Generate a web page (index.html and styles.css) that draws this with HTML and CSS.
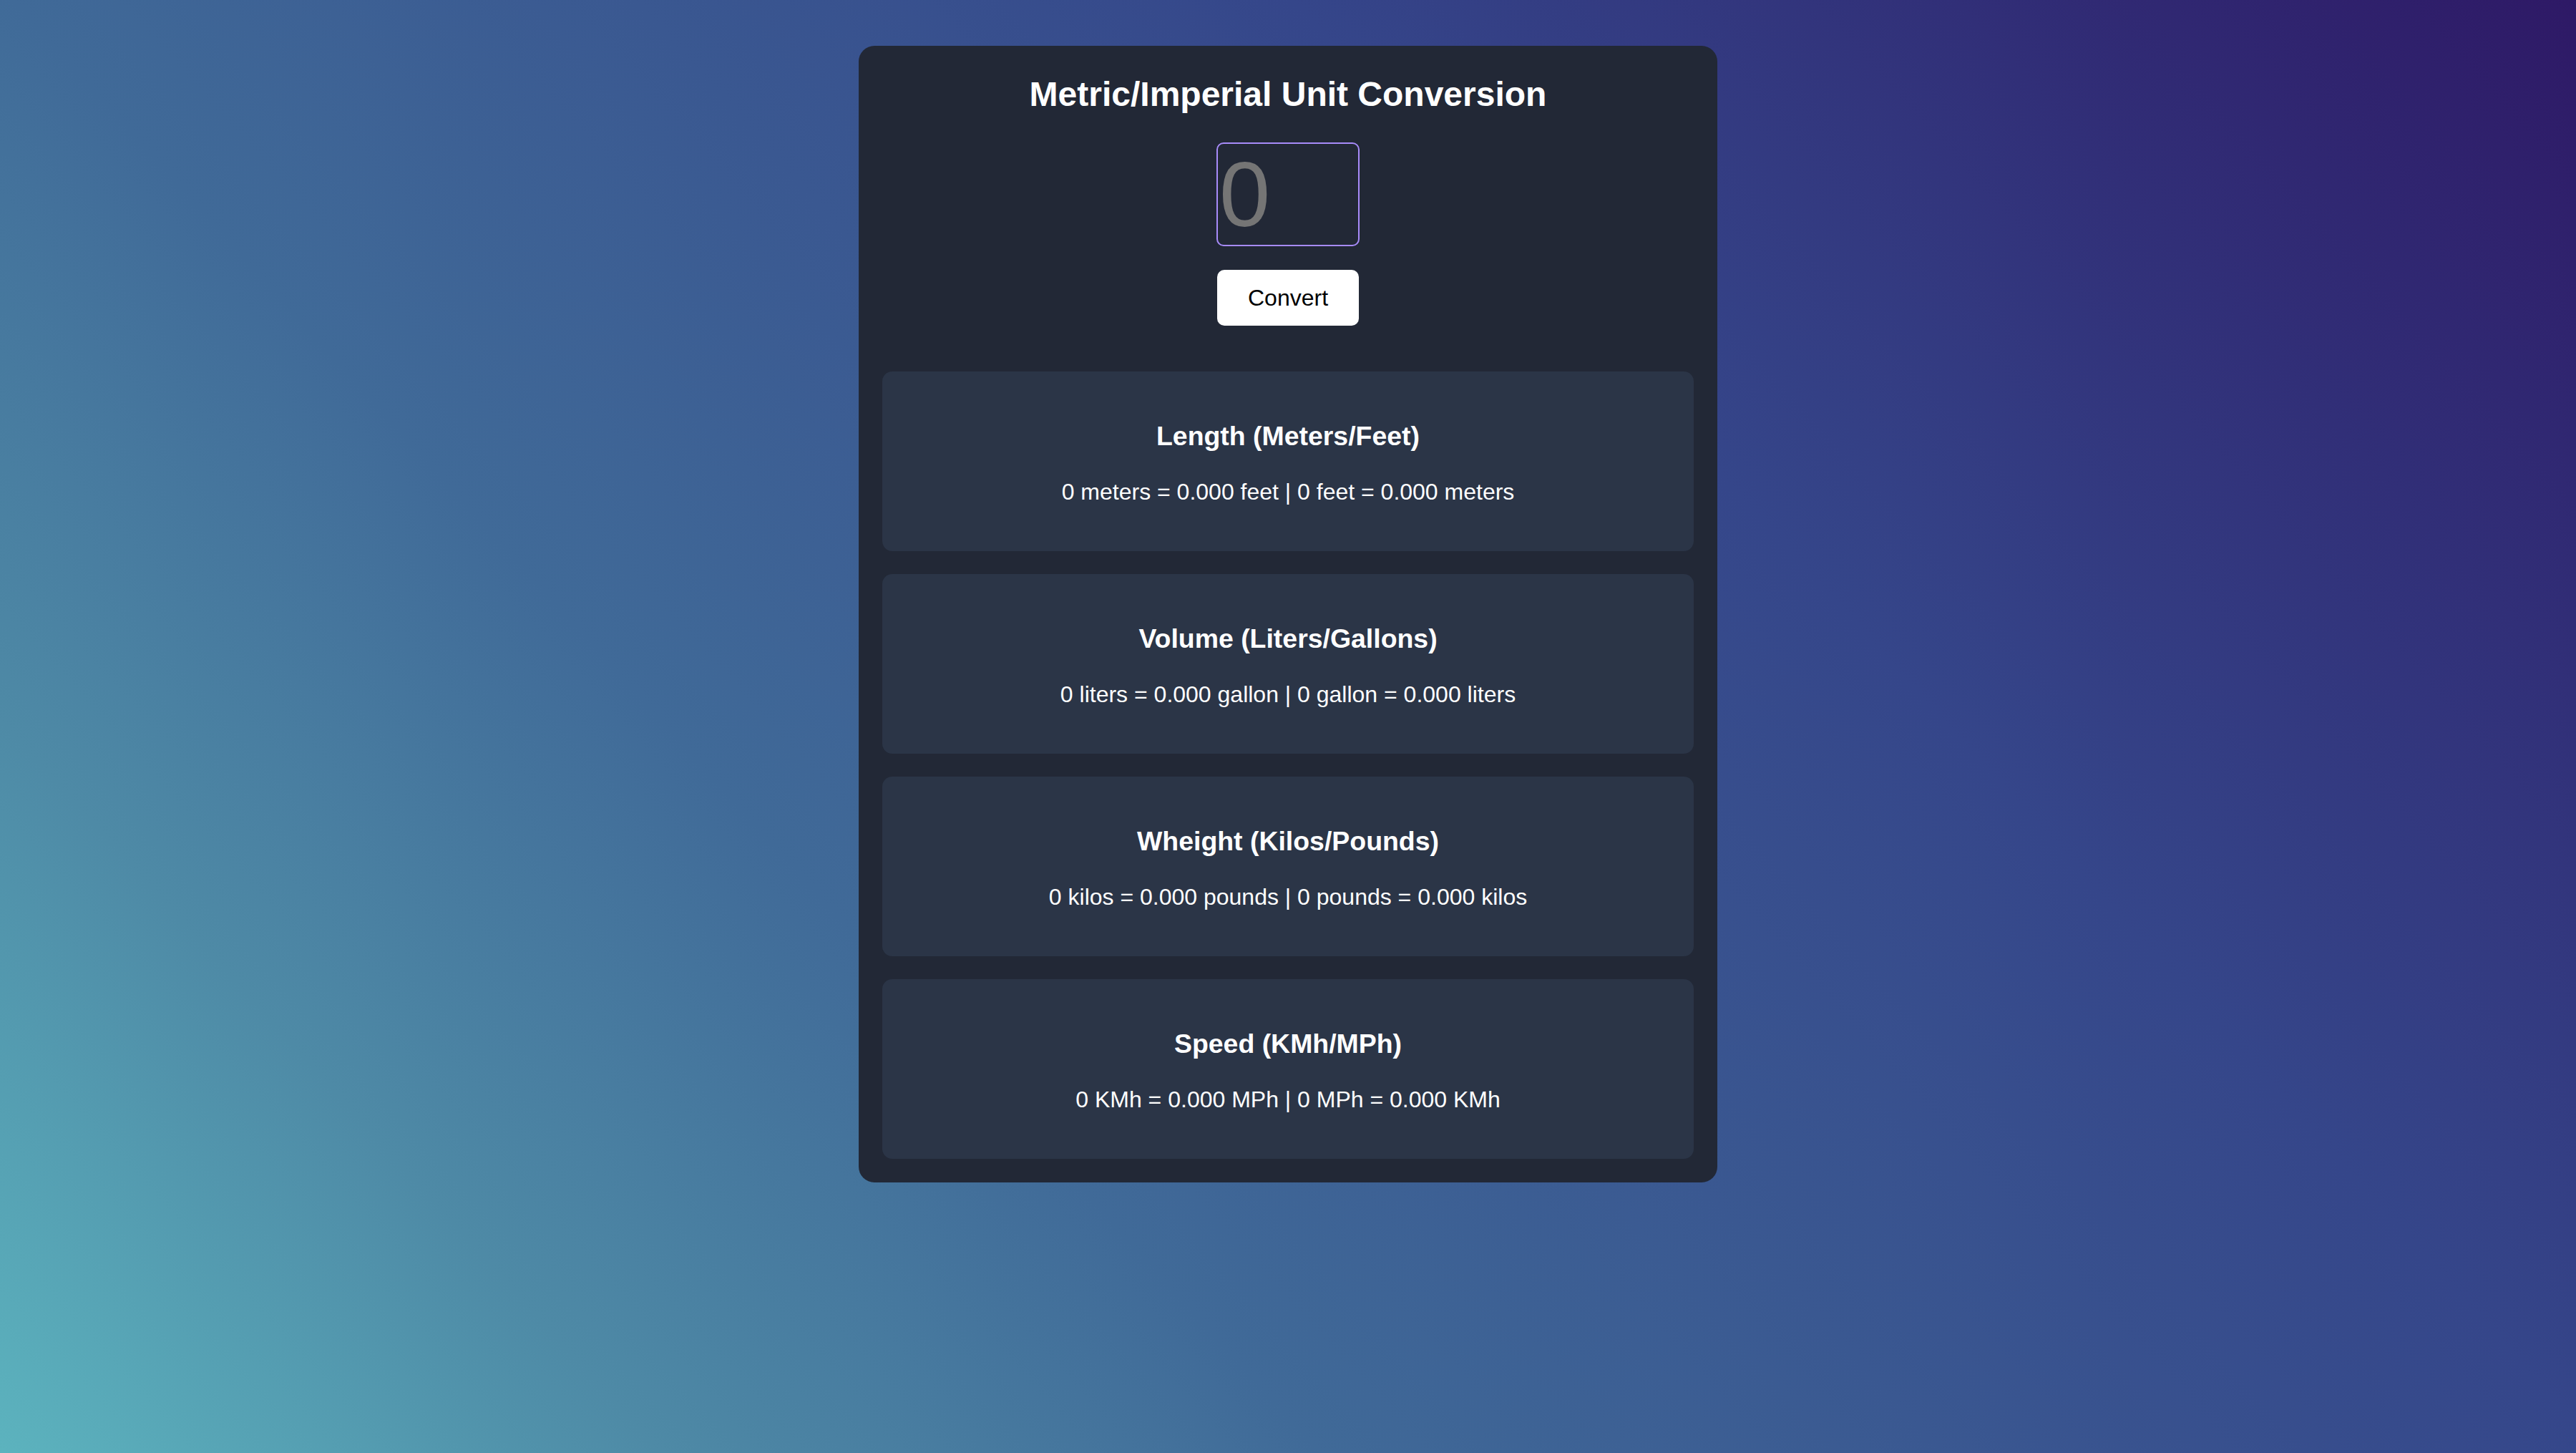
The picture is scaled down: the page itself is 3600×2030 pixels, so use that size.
FILE: index.html
```html
<!DOCTYPE html>
<html lang="en">
<head>
<meta charset="utf-8">
<title>Metric/Imperial Unit Conversion</title>
<link rel="stylesheet" href="styles.css">
</head>
<body>
  <main class="card">
    <h1 class="title">Metric/Imperial Unit Conversion</h1>
    <div class="controls">
      <input class="number-input" type="number" placeholder="0">
      <button class="convert-btn" type="button">Convert</button>
    </div>
    <div class="results">
      <section class="result">
        <h3 class="result-title">Length (Meters/Feet)</h3>
        <p class="result-text">0 meters = 0.000 feet | 0 feet = 0.000 meters</p>
      </section>
      <section class="result">
        <h3 class="result-title">Volume (Liters/Gallons)</h3>
        <p class="result-text">0 liters = 0.000 gallon | 0 gallon = 0.000 liters</p>
      </section>
      <section class="result">
        <h3 class="result-title">Wheight (Kilos/Pounds)</h3>
        <p class="result-text">0 kilos = 0.000 pounds | 0 pounds = 0.000 kilos</p>
      </section>
      <section class="result">
        <h3 class="result-title">Speed (KMh/MPh)</h3>
        <p class="result-text">0 KMh = 0.000 MPh | 0 MPh = 0.000 KMh</p>
      </section>
    </div>
  </main>
</body>
</html>
```

FILE: styles.css
```css
* {
  box-sizing: border-box;
}

html, body {
  margin: 0;
  padding: 0;
}

body {
  min-height: 100vh;
  font-family: "Liberation Sans", Arial, Helvetica, sans-serif;
  color: #ffffff;
  background: linear-gradient(48deg,
    #5cb3be 0%,
    #4e8aa6 17%,
    #406a98 34%,
    #3a5891 50%,
    #35468a 67%,
    #312f78 84%,
    #2e1966 100%);
  padding-top: 64px;
}

.card {
  width: 1200px;
  margin: 0 auto;
  padding: 8px 33px 33px;
  background: #222836;
  border-radius: 22px;
}

.title {
  margin: 32px 0 0;
  font-size: 48px;
  font-weight: bold;
  text-align: center;
  line-height: normal;
}

.controls {
  display: flex;
  flex-direction: column;
  align-items: center;
  gap: 33px;
  margin-top: 40px;
}

.number-input {
  width: 200px;
  height: 145px;
  padding: 0 2px;
  border: 2px solid #a78bfa;
  border-radius: 10px;
  background: transparent;
  color: #ffffff;
  font-family: "Liberation Sans", Arial, sans-serif;
  font-size: 128px;
  line-height: 1;
  outline: none;
  -moz-appearance: textfield;
}

.number-input::-webkit-outer-spin-button,
.number-input::-webkit-inner-spin-button {
  -webkit-appearance: none;
  margin: 0;
}

.number-input::placeholder {
  color: #757575;
}

.convert-btn {
  width: 198px;
  height: 78px;
  border: none;
  border-radius: 10px;
  background: #ffffff;
  color: #000000;
  font-family: "Liberation Sans", Arial, sans-serif;
  font-size: 32px;
  cursor: pointer;
}

.results {
  display: flex;
  flex-direction: column;
  gap: 32px;
  margin-top: 64px;
}

.result {
  padding: 32px;
  background: #2b3547;
  border-radius: 14px;
  text-align: center;
}

.result-title {
  margin: 37.44px 0;
  font-size: 37.44px;
  font-weight: bold;
  line-height: normal;
}

.result-text {
  margin: 32px 0;
  font-size: 32px;
  line-height: normal;
}
```
